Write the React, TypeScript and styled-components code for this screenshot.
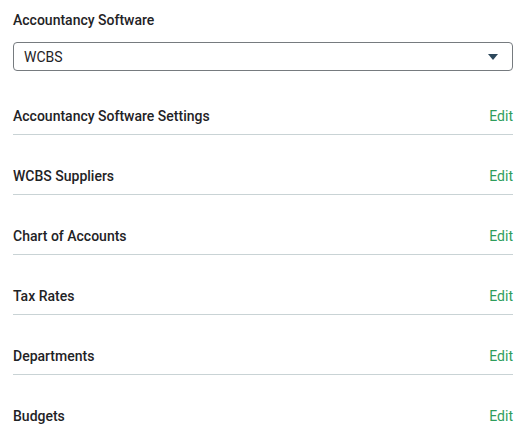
import React from "react"
import styled, { createGlobalStyle } from "styled-components"

const GlobalStyle = createGlobalStyle`
  body {
    margin: 0;
    background: #ffffff;
    font-family: Roboto, "Liberation Sans", sans-serif;
  }
`

const Page = styled.div`
  padding: 10px 13px 0 13px;
  width: 500px;
`

const FieldLabel = styled.div`
  font-size: 14px;
  line-height: 20px;
  font-weight: 500;
  color: #1f2326;
`

const SelectBox = styled.div`
  margin-top: 12px;
  height: 27px;
  border: 1px solid #767b7f;
  border-radius: 4px;
  display: flex;
  align-items: center;
  justify-content: space-between;
  padding: 0 14px 0 10px;
  font-size: 14px;
  color: #1f2326;
`

const Caret = styled.svg`
  width: 10px;
  height: 6px;
  fill: #2c475b;
`

const List = styled.div`
  margin-top: 4px;
  display: flex;
  flex-direction: column;
`

const Row = styled.div<{ $last?: boolean }>`
  height: 60px;
  display: flex;
  align-items: flex-end;
  justify-content: space-between;
  padding-bottom: 8px;
  box-sizing: border-box;
  border-bottom: 1px solid ${(p) => (p.$last ? "transparent" : "#c9d3d5")};
`

const RowTitle = styled.span`
  font-size: 14px;
  line-height: 20px;
  font-weight: 500;
  color: #1f2326;
`

const EditLink = styled.a`
  font-size: 14px;
  line-height: 20px;
  color: #2f9d5c;
  text-decoration: none;
  cursor: pointer;
`

const sections = [
  "Accountancy Software Settings",
  "WCBS Suppliers",
  "Chart of Accounts",
  "Tax Rates",
  "Departments",
  "Budgets",
]

export default function App() {
  return (
    <>
      <GlobalStyle />
      <Page>
        <FieldLabel>Accountancy Software</FieldLabel>
        <SelectBox>
          <span>WCBS</span>
          <Caret viewBox="0 0 10 6">
            <path d="M0 0h10L5 6z" />
          </Caret>
        </SelectBox>
        <List>
          {sections.map((s, i) => (
            <Row key={s} $last={i === sections.length - 1}>
              <RowTitle>{s}</RowTitle>
              <EditLink>Edit</EditLink>
            </Row>
          ))}
        </List>
      </Page>
    </>
  )
}
